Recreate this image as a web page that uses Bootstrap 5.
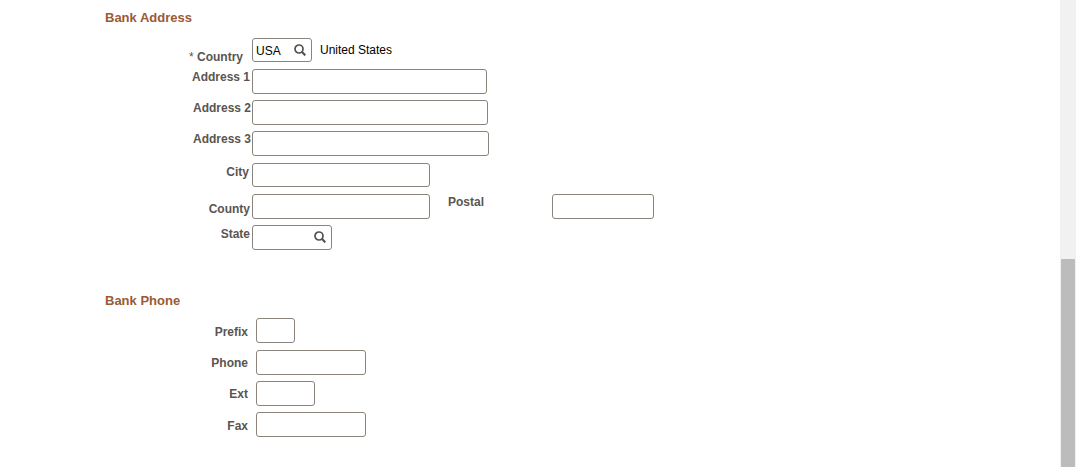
<!DOCTYPE html>
<html lang="en">
<head>
<meta charset="utf-8">
<title>Bank Address</title>
<link href="https://cdn.jsdelivr.net/npm/bootstrap@5.3.0/dist/css/bootstrap.min.css" rel="stylesheet">
<style>
html, body { height: 467px; overflow: hidden; }
body { font-family: "Liberation Sans", Arial, sans-serif; font-size: 12px; line-height: 14px; color: #000; background: #fff; }
.page-shell { height: 467px; }
.page-main { width: 1060px; padding-left: 105px; }
.sect-title { font-size: 13px; line-height: 15px; font-weight: 700; color: #9a5a35; margin: 0; }
.title-one { padding-top: 10px; height: 38px; }
.title-two { padding-top: 37px; height: 62px; }
.field-row { height: 31px; align-items: flex-start; }
.field-row.tall { height: 32px; }
.lbl { flex: 0 0 auto; margin: 0; color: #5a5550; font-weight: 700; text-align: right; }
.addr-lbl { width: 147px; }
.ph-lbl { width: 151px; padding-right: 8px; }
.form-control.pf { font-size: 12px; line-height: 14px; color: #000; padding: 4px 3px 3px; height: 25px; min-height: 0; border: 1px solid #8a837c; border-radius: 3px; background-color: #fff; box-shadow: none; }
.form-control.h24 { height: 24px; }
.w-a1 { width: 235px; } .w-a2 { width: 236px; } .w-a3 { width: 237px; }
.w-city { width: 178px; } .w-postal { width: 102px; }
.w-prefix { width: 39px; } .w-phone { width: 110px; } .w-ext { width: 59px; }
.lookup { position: relative; flex: 0 0 auto; }
.lookup-60 { width: 60px; } .lookup-80 { width: 80px; }
.lookup svg { position: absolute; right: 6px; top: 6px; width: 12px; height: 12px; }
.desc { margin-left: 8px; padding-top: 5px; color: #000; }
.pad-1 { padding-top: 1px; } .pad-2 { padding-top: 2px; } .pad-6 { padding-top: 6px; } .pad-7 { padding-top: 7px; } .pad-8 { padding-top: 8px; } .pad-12 { padding-top: 12px; }
.r-1 { padding-right: 1px; } .r-2 { padding-right: 2px; } .r-3 { padding-right: 3px; } .r-9 { padding-right: 9px; }
.postal-lbl { width: 104px; margin-left: 18px; text-align: left; }
.scroll-track { width: 16px; background: #f1f1f1; padding-top: 259px; }
.scroll-thumb { width: 14px; margin: 0 auto; height: 208px; background: #bcbcbc; }
</style>
</head>
<body>
<div class="page-shell d-flex">
  <main class="page-main">
    <h2 class="sect-title title-one">Bank Address</h2>

    <div class="field-row d-flex">
      <label class="lbl addr-lbl pad-12 r-9" for="country"><span class="fw-normal">*</span> Country</label>
      <div class="lookup lookup-60">
        <input id="country" class="form-control pf h24" value="USA">
        <svg viewBox="0 0 12 12" fill="none" stroke="#55504b" aria-hidden="true"><circle cx="5" cy="5" r="4" stroke-width="1.7"/><path d="M7.8 7.8 11.3 11.3" stroke-width="2.2"/></svg>
      </div>
      <span class="desc">United States</span>
    </div>
    <div class="field-row d-flex">
      <label class="lbl addr-lbl pad-1 r-2" for="a1">Address 1</label>
      <input id="a1" class="form-control pf w-a1">
    </div>
    <div class="field-row d-flex">
      <label class="lbl addr-lbl pad-1 r-1" for="a2">Address 2</label>
      <input id="a2" class="form-control pf w-a2">
    </div>
    <div class="field-row tall d-flex">
      <label class="lbl addr-lbl pad-1 r-1" for="a3">Address 3</label>
      <input id="a3" class="form-control pf w-a3">
    </div>
    <div class="field-row d-flex">
      <label class="lbl addr-lbl pad-2 r-3" for="city">City</label>
      <input id="city" class="form-control pf h24 w-city">
    </div>
    <div class="field-row d-flex">
      <label class="lbl addr-lbl pad-8 r-2" for="county">County</label>
      <input id="county" class="form-control pf w-city">
      <label class="lbl postal-lbl pad-1" for="postal">Postal</label>
      <input id="postal" class="form-control pf w-postal">
    </div>
    <div class="field-row d-flex">
      <label class="lbl addr-lbl pad-2 r-2" for="state">State</label>
      <div class="lookup lookup-80">
        <input id="state" class="form-control pf">
        <svg viewBox="0 0 12 12" fill="none" stroke="#55504b" aria-hidden="true"><circle cx="5" cy="5" r="4" stroke-width="1.7"/><path d="M7.8 7.8 11.3 11.3" stroke-width="2.2"/></svg>
      </div>
    </div>

    <h2 class="sect-title title-two">Bank Phone</h2>

    <div class="field-row tall d-flex">
      <label class="lbl ph-lbl pad-7" for="prefix">Prefix</label>
      <input id="prefix" class="form-control pf w-prefix">
    </div>
    <div class="field-row d-flex">
      <label class="lbl ph-lbl pad-6" for="phone">Phone</label>
      <input id="phone" class="form-control pf w-phone">
    </div>
    <div class="field-row d-flex">
      <label class="lbl ph-lbl pad-6" for="ext">Ext</label>
      <input id="ext" class="form-control pf w-ext">
    </div>
    <div class="field-row d-flex">
      <label class="lbl ph-lbl pad-7" for="fax">Fax</label>
      <input id="fax" class="form-control pf w-phone">
    </div>
  </main>
  <div class="scroll-track" aria-hidden="true"><div class="scroll-thumb"></div></div>
</div>
<script src="https://cdn.jsdelivr.net/npm/bootstrap@5.3.0/dist/js/bootstrap.bundle.min.js"></script>
</body>
</html>
